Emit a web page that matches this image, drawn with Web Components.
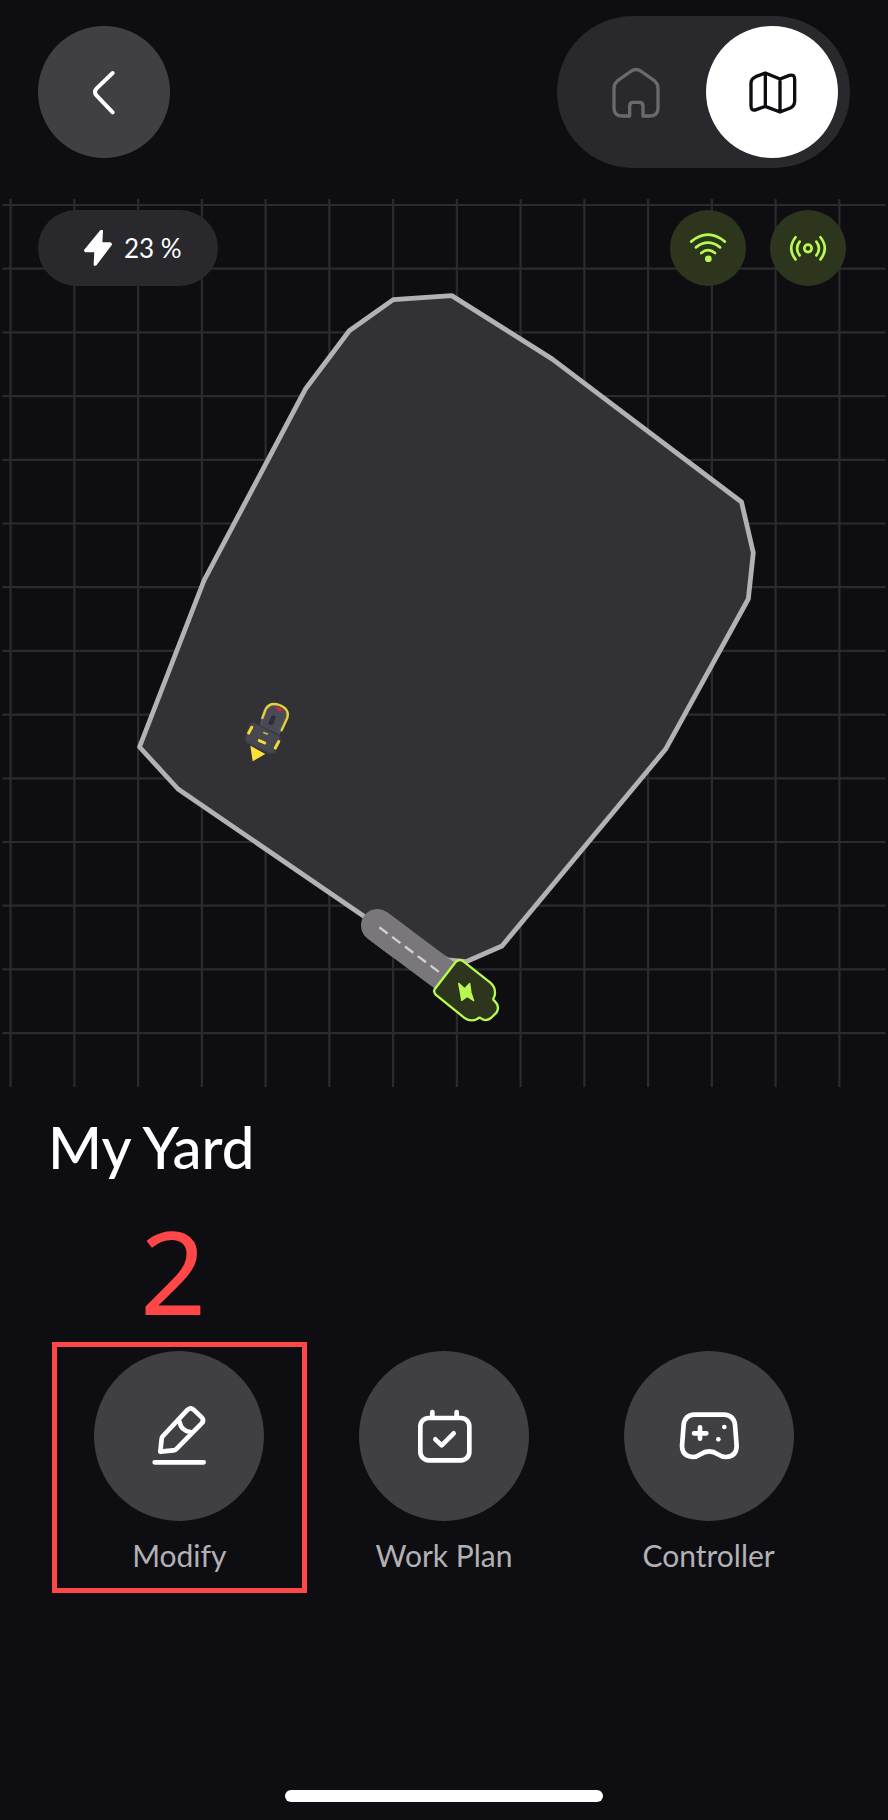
<!DOCTYPE html>
<html lang="en">
<head>
<meta charset="utf-8">
<meta name="viewport" content="width=device-width, initial-scale=1">
<title>My Yard</title>
<style>
  body {
    margin: 0;
    background: #0e0d12;
    color: #fff;
    font-family: Lato, "Open Sans", sans-serif;
  }
</style>
</head>
<body>
<yard-app></yard-app>

<script>
"use strict";

function define(name, html) {
  const template = document.createElement('template');
  template.innerHTML = html;
  customElements.define(name, class extends HTMLElement {
    constructor() {
      super();
      this.attachShadow({ mode: 'open' }).appendChild(template.content.cloneNode(true));
    }
  });
}

// round button, the icon goes in the slot
class RoundButton extends HTMLElement {
  constructor() {
    super();
    this.attachShadow({ mode: 'open' }).innerHTML = `
      <style>
      :host { display: block; flex: none; }
      button {
        display: block;
        width: 132px;
        height: 132px;
        padding: 0;
        border: 0;
        border-radius: 50%;
        background: var(--fill, #403f44);
        color: var(--ink, #fff);
        cursor: pointer;
      }
      ::slotted(svg) { display: block; width: 100%; height: 100%; }
      </style>
      <button type="button"><slot></slot></button>`;
    this.shadowRoot.querySelector('button').setAttribute('aria-label', this.getAttribute('label') || '');
  }
}
customElements.define('round-button', RoundButton);

define('top-bar', `
  <style>
  :host {
    display: flex;
    justify-content: space-between;
    align-items: center;
    padding: 16px 38px 31px;
  }
  nav {
    display: flex;
    gap: 4px;
    padding: 10px 12px 10px 13px;
    border-radius: 76px;
    background: #29282d;
  }
  svg { fill: none; stroke: currentColor; stroke-linecap: round; stroke-linejoin: round; }
  .home { --fill: transparent; --ink: #6a696e; }
  .map { --fill: #fff; --ink: #0e0d12; }
  </style>
  <round-button label="Back">
    <svg viewBox="114 78 396 396" stroke-width="12"><path d="M338 219L290 265Q280 276 290 287L338 337"/></svg>
  </round-button>
  <nav aria-label="View">
    <round-button class="home" label="Home">
      <svg viewBox="89 78 396 396" stroke-width="10"><path d="M268 348H245Q221 348 221 324V266Q221 251 232 242L273 213Q287 204 301 213L342 242Q353 251 353 266V324Q353 348 329 348H308V318Q308 307 297 307H279Q268 307 268 318Z"/></svg>
    </round-button>
    <round-button class="map" label="Map">
      <svg viewBox="499 78 396 396" stroke-width="10"><path d="M677 219L648 230Q634 236 634 250V317Q634 335 650 329L677 319L721 336L752 324Q765 318 765 303V238Q765 222 749 226L721 237ZM677 219V319M721 237V336"/></svg>
    </round-button>
  </nav>
`);

define('battery-pill', `
  <style>
  :host {
    box-sizing: border-box;
    display: flex;
    align-items: center;
    gap: 12px;
    min-width: 180px;
    height: 76px;
    padding: 0 36px 0 46px;
    border-radius: 38px;
    background: #29282d;
    font-size: 26px;
    line-height: 36px;
    white-space: nowrap;
  }
  svg { width: 28px; height: 36px; flex: none; }
  </style>
  <svg viewBox="252 689 84 108" fill="#fff" stroke="#fff" stroke-width="6" stroke-linejoin="round" aria-hidden="true"><path d="M303 692L255 750L257 753H286L284 793H287L333 732L331 729H304L306 692Z"/></svg>
  <span><slot></slot></span>
`);

define('status-dot', `
  <style>
  :host {
    display: block;
    width: 76px;
    height: 76px;
    border-radius: 50%;
    background: #2d361c;
    color: #b9fa51;
  }
  ::slotted(svg) { display: block; width: 100%; height: 100%; }
  </style>
  <slot></slot>
`);

define('yard-map', `
  <style>
  :host { display: block; position: relative; }
  .plan { display: block; width: 100%; height: auto; }
  .overlay {
    position: absolute;
    inset: 11px 42px auto 38px;
    display: flex;
    justify-content: space-between;
  }
  .signals { display: flex; gap: 24px; }
  </style>
  <svg class="plan" viewBox="0 199 888 888" role="img" aria-label="Yard map">
    <path id="grid" fill="none" stroke="#fff" stroke-opacity=".12" stroke-width="2.2"/>
    <path fill="#323136" stroke="#b2b1b5" stroke-width="4.8" stroke-linejoin="round" d="M393.3 299.6L451.7 295.6L552 358.9L741.5 502L753.3 552.7L748.3 599L665.5 749.3L502 946L466 961.7L448 960L365 917L178 789L139.5 747L204 580.5L305.3 389.3L349.3 330.7Z"/>

    <!-- mower -->
    <g transform="translate(230 690) scale(.33333)" stroke-linejoin="round">
      <path fill="#47484f" stroke="#3c3d44" stroke-width="4" d="M68 98L92 107L128 128L148 136L151 151L134 189L118 190L50 158L45 147L60 103Z"/>
      <path fill="#504f59" d="M90 104L99 62Q109 36 138 41Q177 52 176 81L149 134Z"/>
      <path fill="none" stroke="#e5d13c" stroke-width="7" stroke-linecap="round" d="M97 84L107 58Q119 35 149 45Q179 57 172 83L155 121"/>
      <path fill="#494a55" d="M111 69Q121 45 146 54Q168 64 160 88L142 126L96 106Z"/>
      <path fill="#2c2d35" d="M121 84Q127 72 138 79L130 102Q122 108 115 101Z"/>
      <path stroke="#de2433" stroke-width="9" d="M139 54L155 61"/>
      <path fill="none" stroke="#f1dd37" stroke-width="9" stroke-linecap="round" d="M65 112L56 129M146 155L136 174M88 152L104 159"/>
      <path stroke="#c9b93c" stroke-width="5" stroke-linecap="round" d="M102 128L112 132"/>
      <path fill="#ffe234" d="M61 167L106 192L68 214Z"/>
    </g>

    <!-- charging dock -->
    <g transform="translate(340 890) scale(.33333)" stroke-linejoin="round">
      <path stroke="#79777b" stroke-width="98" stroke-linecap="round" d="M112 106L180 157"/>
      <path stroke="#79777b" stroke-width="98" d="M112 106L318 260"/>
      <path stroke="#d0d2d6" stroke-width="7" stroke-dasharray="31 17" d="M118 112L297 246"/>
      <path fill="#2d361c" stroke="#b9fa51" stroke-width="7" d="M347 216Q359 205 371 215L451 278Q466 291 465 310Q465 319 460 326Q459 331 465 334Q480 349 470 367L453 384Q437 396 423 385Q418 381 413 386Q393 397 375 385L287 314Q279 305 285 296Z"/>
      <path fill="#b9fa51" stroke="#b9fa51" stroke-width="4" d="M356 280L374 296L389 280L393 308L401 332L382 319L365 331L361 306Z"/>
    </g>
  </svg>
  <div class="overlay">
    <battery-pill>23 %</battery-pill>
    <div class="signals">
      <status-dot role="img" aria-label="Wi-Fi connected">
        <svg viewBox="391 631 226 226" fill="none" stroke="currentColor" stroke-width="8" stroke-linecap="round">
          <path d="M454 725Q504 684 554 725M468 742Q504 714 540 742M484 759Q504 742 525 759"/>
          <circle cx="505" cy="776" r="10" fill="currentColor" stroke="none"/>
        </svg>
      </status-dot>
      <status-dot role="img" aria-label="Positioning signal">
        <svg viewBox="690 631 226 226" fill="none" stroke="currentColor" stroke-width="8" stroke-linecap="round">
          <circle cx="803" cy="745" r="11"/>
          <path d="M766 712Q740 745 766 778M778 725Q763 745 778 766M840 712Q866 745 840 778M828 725Q843 745 828 766"/>
        </svg>
      </status-dot>
    </div>
  </div>
`);

// the grid is 14 lines each way
customElements.whenDefined('yard-map').then(() => {
  const app = document.querySelector('yard-app');
  const map = app.shadowRoot.querySelector('yard-map');
  let d = '';
  for (let i = 0; i < 14; i++) {
    d += `M${10.6 + i * 63.75} 199V1087M2.5 ${205 + i * 63.7}H885.5`;
  }
  map.shadowRoot.getElementById('grid').setAttribute('d', d);
});

define('yard-action', `
  <style>
  :host { display: block; position: relative; }
  button {
    display: flex;
    flex-direction: column;
    align-items: center;
    gap: 14px;
    width: 100%;
    padding: 0;
    border: 0;
    background: none;
    color: #b2b1b5;
    font: inherit;
    font-size: 30px;
    line-height: 40px;
    cursor: pointer;
  }
  .disc {
    width: 170px;
    height: 170px;
    border-radius: 50%;
    background: #403f44;
    color: #fff;
  }
  ::slotted(svg) {
    display: block;
    width: 100%;
    height: 100%;
    fill: none;
    stroke: currentColor;
    stroke-width: 14px;
    stroke-linecap: round;
    stroke-linejoin: round;
  }
  </style>
  <button type="button">
    <span class="disc"><slot name="icon"></slot></span>
    <span><slot></slot></span>
  </button>
  <slot name="mark"></slot>
`);

// numbered frame laid over an action
define('step-mark', `
  <style>
  :host {
    position: absolute;
    inset: -9px 5px -18px;
    border: 5px solid #ff4747;
    color: #ff4747;
    pointer-events: none;
  }
  span {
    position: absolute;
    bottom: 100%;
    left: 83px;
    font: 116px/154px "Noto Sans", "Open Sans", sans-serif;
  }
  </style>
  <span><slot></slot></span>
`);

define('yard-app', `
  <style>
  :host {
    display: flex;
    flex-direction: column;
    min-height: 100vh;
  }
  h1 {
    margin: 26px 48px 0;
    font-size: 58px;
    font-weight: 500;
    line-height: 68px;
  }
  .actions {
    display: grid;
    grid-template-columns: repeat(3, 1fr);
    padding: 170px 47px 0;
  }
  .home-bar {
    width: 318px;
    height: 12px;
    margin: auto auto 18px;
    border-radius: 6px;
    background: #fff;
  }
  </style>
  <top-bar></top-bar>
  <yard-map></yard-map>
  <h1>My Yard</h1>
  <div class="actions">
    <yard-action>
      <svg slot="icon" viewBox="162 63 510 510"><path d="M443 239Q452 231 461 239L485 262Q494 271 485 280L408 358Q405 361 400 361L361 365L365 326Q366 321 369 318ZM419 276Q423 302 451 306M344 397H491"/></svg>
      Modify
      <step-mark slot="mark">2</step-mark>
    </yard-action>
    <yard-action>
      <svg slot="icon" viewBox="57 33 510 510"><rect x="241" y="234" width="147" height="127" rx="25"/><path d="M277 216V232M350 216V232M286 298L305 316L341 280"/></svg>
      Work Plan
    </yard-action>
    <yard-action>
      <svg slot="icon" viewBox="73 33 510 510"><path d="M284 224H372Q402 225 406 254L411 318Q410 350 379 351Q367 351 355 343Q329 325 302 343Q291 351 279 351Q248 349 247 318L252 254Q256 225 284 224ZM301 262V296M283 280H320"/><g fill="#fff" stroke="none"><circle cx="374" cy="261" r="7"/><circle cx="356" cy="298" r="7"/></g></svg>
      Controller
    </yard-action>
  </div>
  <div class="home-bar"></div>
`);
</script>
</body>
</html>
